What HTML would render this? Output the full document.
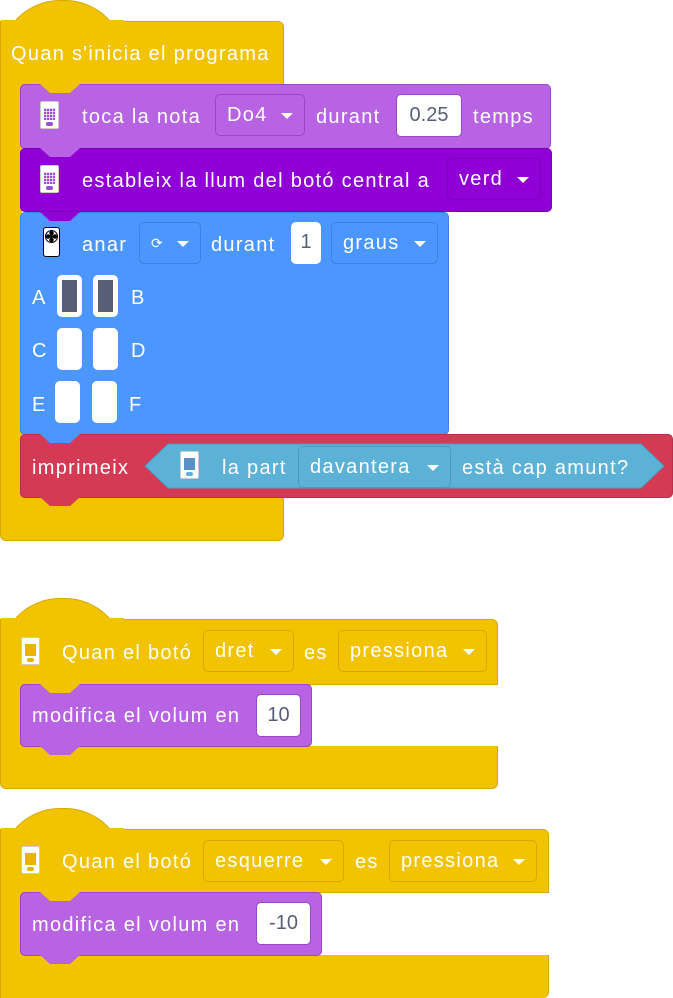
<!DOCTYPE html>
<html><head><meta charset="utf-8"><style>
body{margin:0;width:673px;height:998px;background:#fff;position:relative;overflow:hidden;font-family:"Liberation Sans",sans-serif;}
.a{position:absolute;box-sizing:border-box;}
.y{background:#F2C300;border:1px solid #D6A900;}
.t{position:absolute;color:#fff;font-size:20px;letter-spacing:1.3px;white-space:nowrap;line-height:20px;margin-top:2px;}
.dd{position:absolute;box-sizing:border-box;border-radius:5px;color:#fff;font-size:20px;letter-spacing:1.3px;line-height:40px;padding-left:11px;white-space:nowrap;}
.dd:after{content:"";position:absolute;right:11px;top:18px;border-left:6px solid transparent;border-right:6px solid transparent;border-top:6px solid #fff;}
.wb{position:absolute;box-sizing:border-box;background:#fff;border-radius:5px;color:#575E75;font-size:20px;line-height:41px;text-align:center;}
.tab{position:absolute;width:40px;height:9px;clip-path:polygon(0 0,100% 0,75% 100%,25% 100%);z-index:5;}
.ic{position:absolute;width:19px;height:28px;background:#fff;border:1px solid #ccc;border-radius:2px;box-sizing:border-box;}
.ic i{position:absolute;left:3px;top:6px;width:11px;height:12px;background:repeating-linear-gradient(90deg,transparent 0 2px,rgba(255,255,255,.7) 2px 3px),repeating-linear-gradient(0deg,transparent 0 2px,rgba(255,255,255,.7) 2px 3px),#9A4FD0;}
.ic b{position:absolute;left:5px;bottom:2px;width:7px;height:4px;border-radius:3px;background:#9A4FD0;}
.lb{position:absolute;box-sizing:border-box;background:#fff;border-radius:5px;width:25px;height:42px;}
</style></head><body>

<!-- Hat 1 -->
<div class="a y" style="left:0;top:0;width:125px;height:60px;border-radius:62px 62px 0 0;border-bottom:none"></div>
<div class="a y" style="left:0;top:21px;width:284px;height:64px;border-radius:0 6px 0 0;border-top:1px solid #D6A900"></div>
<div class="a" style="left:1px;top:20px;width:123px;height:6px;background:#F2C300"></div>
<div class="a y" style="left:0;top:80px;width:22px;height:425px;border-top:none;border-right:none"></div>
<div class="a y" style="left:0;top:496px;width:284px;height:45px;border-radius:0 0 6px 6px;border-top:none"></div>
<div class="a" style="left:1px;top:495px;width:20px;height:5px;background:#F2C300"></div>
<div class="t" style="left:11px;top:42px">Quan s'inicia el programa</div>

<!-- purple -->
<div class="a" style="left:20px;top:84px;width:531px;height:65px;background:#B763E3;border:1px solid #9A47C7;border-radius:5px"></div>
<div class="tab" style="left:40px;top:84px;background:#F2C300"></div>
<div class="ic" style="left:40px;top:101px"><i></i><b></b></div>
<div class="t" style="left:82px;top:105px">toca la nota</div>
<div class="dd" style="left:215px;top:94px;width:90px;height:42px;border:1px solid #9A47C7">Do4</div>
<div class="t" style="left:316px;top:105px">durant</div>
<div class="wb" style="left:396px;top:94px;width:66px;height:43px;border:1px solid #9A47C7">0.25</div>
<div class="t" style="left:473px;top:105px">temps</div>

<!-- dark purple -->
<div class="a" style="left:20px;top:148px;width:532px;height:64px;background:#9000D6;border:1px solid #7A00B5;border-radius:5px"></div>
<div class="tab" style="left:40px;top:148px;background:#B763E3"></div>
<div class="ic" style="left:40px;top:165px"><i></i><b></b></div>
<div class="t" style="left:82px;top:169px">estableix la llum del botó central a</div>
<div class="dd" style="left:447px;top:158px;width:94px;height:42px;border:1px solid #7A00B5">verd</div>

<!-- blue -->
<div class="a" style="left:20px;top:212px;width:429px;height:223px;background:#4C97FF;border:1px solid #3D82E0;border-radius:5px"></div>
<div class="tab" style="left:40px;top:212px;background:#9000D6"></div>
<div class="a" style="left:43px;top:227px;width:17px;height:30px;background:#fff;border:1px solid #000;border-radius:3px">
<div class="a" style="left:1px;top:2px;width:13px;height:13px;border-radius:50%;border:1px solid #000;background:radial-gradient(circle,#000 0 1.5px,transparent 2px),radial-gradient(circle at 50% 18%,#000 0 2px,transparent 2.5px),radial-gradient(circle at 50% 82%,#000 0 2px,transparent 2.5px),radial-gradient(circle at 18% 50%,#000 0 2px,transparent 2.5px),radial-gradient(circle at 82% 50%,#000 0 2px,transparent 2.5px)"></div></div>
<div class="t" style="left:82px;top:233px">anar</div>
<div class="dd" style="left:139px;top:222px;width:62px;height:42px;border:1px solid #3D82E0;font-size:14px">⟳</div>
<div class="t" style="left:211px;top:233px">durant</div>
<div class="wb" style="left:291px;top:222px;width:30px;height:42px">1</div>
<div class="dd" style="left:331px;top:222px;width:107px;height:42px;border:1px solid #3D82E0">graus</div>
<div class="t" style="left:32px;top:286px">A</div>
<div class="lb" style="left:57px;top:275px;border:5px solid #fff;background:#575E75"></div>
<div class="lb" style="left:93px;top:275px;border:5px solid #fff;background:#575E75"></div>
<div class="t" style="left:131px;top:286px">B</div>
<div class="t" style="left:32px;top:339px">C</div>
<div class="lb" style="left:57px;top:328px"></div>
<div class="lb" style="left:93px;top:328px"></div>
<div class="t" style="left:131px;top:339px">D</div>
<div class="t" style="left:32px;top:393px">E</div>
<div class="lb" style="left:55px;top:381px"></div>
<div class="lb" style="left:92px;top:381px"></div>
<div class="t" style="left:129px;top:393px">F</div>

<!-- red -->
<div class="a" style="left:20px;top:434px;width:653px;height:64px;background:#D43A54;border:1px solid #B8304A;border-radius:5px"></div>
<div class="tab" style="left:40px;top:434px;background:#4C97FF"></div>
<div class="tab" style="left:40px;top:497px;background:#D43A54"></div>
<div class="t" style="left:32px;top:456px">imprimeix</div>
<svg class="a" style="left:144px;top:443px" width="521" height="46"><polygon points="1,23 24,1 497,1 520,23 497,45 24,45" fill="#5CB1D6" stroke="#4A9AC0"/></svg>
<div class="ic" style="left:180px;top:451px"><i style="background:#5A8FC8"></i><b style="background:#5CB1D6"></b></div>
<div class="t" style="left:222px;top:456px">la part</div>
<div class="dd" style="left:298px;top:446px;width:153px;height:42px;border:1px solid #4A9AC0">davantera</div>
<div class="t" style="left:462px;top:456px">està cap amunt?</div>

<!-- Hat 2 -->
<div class="a y" style="left:0;top:598px;width:125px;height:60px;border-radius:62px 62px 0 0;border-bottom:none"></div>
<div class="a y" style="left:0;top:619px;width:498px;height:66px;border-radius:0 6px 0 0"></div>
<div class="a" style="left:1px;top:618px;width:123px;height:6px;background:#F2C300"></div>
<div class="a y" style="left:0;top:680px;width:22px;height:75px;border-top:none;border-right:none"></div>
<div class="a y" style="left:0;top:746px;width:498px;height:43px;border-radius:0 0 6px 6px;border-top:none"></div>
<div class="a" style="left:1px;top:744px;width:20px;height:5px;background:#F2C300"></div>
<div class="ic" style="left:21px;top:637px"><i style="background:#E8B400"></i><b style="background:#E8B400"></b></div>
<div class="t" style="left:62px;top:641px">Quan el botó</div>
<div class="dd" style="left:203px;top:630px;width:91px;height:42px;border:1px solid #D6A900">dret</div>
<div class="t" style="left:304px;top:641px">es</div>
<div class="dd" style="left:338px;top:630px;width:149px;height:42px;border:1px solid #D6A900">pressiona</div>
<div class="a" style="left:20px;top:684px;width:292px;height:63px;background:#B763E3;border:1px solid #9A47C7;border-radius:5px"></div>
<div class="tab" style="left:40px;top:684px;background:#F2C300"></div>
<div class="tab" style="left:40px;top:746px;background:#B763E3"></div>
<div class="t" style="left:32px;top:704px">modifica el volum en</div>
<div class="wb" style="left:256px;top:694px;width:45px;height:43px;border:1px solid #9A47C7">10</div>

<!-- Hat 3 -->
<div class="a y" style="left:0;top:808px;width:125px;height:60px;border-radius:62px 62px 0 0;border-bottom:none"></div>
<div class="a y" style="left:0;top:829px;width:549px;height:64px;border-radius:0 6px 0 0"></div>
<div class="a" style="left:1px;top:828px;width:123px;height:6px;background:#F2C300"></div>
<div class="a y" style="left:0;top:888px;width:22px;height:75px;border-top:none;border-right:none"></div>
<div class="a y" style="left:0;top:955px;width:549px;height:43px;border-radius:0 0 6px 0;border-top:none;border-bottom:none"></div>
<div class="a" style="left:1px;top:953px;width:20px;height:5px;background:#F2C300"></div>
<div class="ic" style="left:21px;top:846px"><i style="background:#E8B400"></i><b style="background:#E8B400"></b></div>
<div class="t" style="left:62px;top:850px">Quan el botó</div>
<div class="dd" style="left:203px;top:840px;width:141px;height:42px;border:1px solid #D6A900">esquerre</div>
<div class="t" style="left:355px;top:850px">es</div>
<div class="dd" style="left:389px;top:840px;width:148px;height:42px;border:1px solid #D6A900">pressiona</div>
<div class="a" style="left:20px;top:892px;width:302px;height:64px;background:#B763E3;border:1px solid #9A47C7;border-radius:5px"></div>
<div class="tab" style="left:40px;top:892px;background:#F2C300"></div>
<div class="tab" style="left:40px;top:955px;background:#B763E3"></div>
<div class="t" style="left:32px;top:913px">modifica el volum en</div>
<div class="wb" style="left:256px;top:902px;width:55px;height:43px;border:1px solid #9A47C7">-10</div>

</body></html>
